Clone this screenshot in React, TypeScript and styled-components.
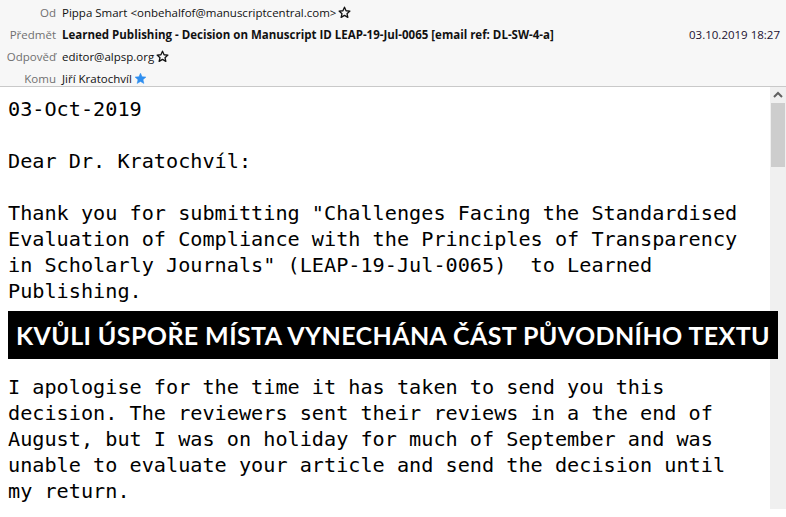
import styled, { createGlobalStyle } from 'styled-components';

const GlobalStyle = createGlobalStyle`
  html, body {
    margin: 0;
    padding: 0;
    background: #ffffff;
  }
`;

interface StarProps {
  filled?: boolean;
}

function Star({ filled }: StarProps) {
  return (
    <StarIcon viewBox='0 0 24 24' aria-hidden='true'>
      <path
        d='M12 2.2l2.9 6.6 7.1.6-5.4 4.7 1.6 7-6.2-3.7-6.2 3.7 1.6-7L2 9.4l7.1-.6z'
        fill={filled ? '#2f8ff0' : 'none'}
        stroke={filled ? '#2f8ff0' : '#111'}
        strokeWidth={filled ? 1 : 2.4}
        strokeLinejoin='round'
      />
    </StarIcon>
  );
}

const bodyTop = [
  '03-Oct-2019',
  '',
  'Dear Dr. Kratochvíl:',
  '',
  'Thank you for submitting "Challenges Facing the Standardised',
  'Evaluation of Compliance with the Principles of Transparency',
  'in Scholarly Journals" (LEAP-19-Jul-0065)  to Learned',
  'Publishing.',
];

const bodyBottom = [
  'I apologise for the time it has taken to send you this',
  'decision. The reviewers sent their reviews in a the end of',
  'August, but I was on holiday for much of September and was',
  'unable to evaluate your article and send the decision until',
  'my return.',
];

export default function App() {
  return (
    <Window>
      <GlobalStyle />
      <Header>
        <Label>Od</Label>
        <Value>
          Pippa Smart &lt;onbehalfof@manuscriptcentral.com&gt;
          <Star />
        </Value>
        <Label>Předmět</Label>
        <Value $bold>
          Learned Publishing - Decision on Manuscript ID LEAP-19-Jul-0065 [email ref: DL-SW-4-a]
        </Value>
        <DateCell>03.10.2019 18:27</DateCell>
        <Label>Odpověď</Label>
        <Value>
          editor@alpsp.org
          <Star />
        </Value>
        <Label>Komu</Label>
        <Value>
          Jiří Kratochvíl
          <Star filled />
        </Value>
      </Header>
      <Body>
        <Content>
          <Plain>{bodyTop.join('\n')}</Plain>
          <Banner>KVŮLI ÚSPOŘE MÍSTA VYNECHÁNA ČÁST PŮVODNÍHO TEXTU</Banner>
          <Plain>{bodyBottom.join('\n')}</Plain>
        </Content>
        <Scrollbar>
          <ScrollArrow viewBox='0 0 16 16' aria-hidden='true'>
            <path d='M4 10l4-4 4 4' fill='none' stroke='#606060' strokeWidth='2' />
          </ScrollArrow>
          <Thumb />
        </Scrollbar>
      </Body>
    </Window>
  );
}

const Window = styled.div`
  width: 786px;
  height: 517px;
  overflow: hidden;
  background: #ffffff;
  display: flex;
  flex-direction: column;
`;

const Header = styled.div`
  height: 87px;
  box-sizing: border-box;
  padding: 1px 6px 0 0;
  background: #f7f7f7;
  border-bottom: 1px solid #c9c9c9;

  display: grid;
  grid-template-columns: 56px 1fr auto;
  grid-auto-rows: 22px;
  column-gap: 6px;
  align-items: center;

  font-family: 'Open Sans', 'Noto Sans', sans-serif;
  font-size: 11.5px;
  color: #111;
`;

const Label = styled.div`
  grid-column: 1;
  text-align: right;
  color: #707070;
`;

const Value = styled.div<{ $bold?: boolean }>`
  grid-column: 2;
  display: flex;
  align-items: center;
  gap: 2px;
  white-space: nowrap;
  font-weight: ${(p) => (p.$bold ? 700 : 400)};
`;

const DateCell = styled.div`
  grid-column: 3;
  color: #1a1030;
`;

const StarIcon = styled.svg`
  width: 13px;
  height: 13px;
  flex-shrink: 0;
`;

const Body = styled.div`
  flex: 1;
  display: flex;
  align-items: flex-start;
`;

const Content = styled.div`
  flex: 1;
  padding: 9px 0 0 8px;
  display: flex;
  flex-direction: column;
`;

const Plain = styled.div`
  white-space: pre;
  font-family: 'DejaVu Sans Mono', 'Liberation Mono', monospace;
  font-size: 20.2px;
  line-height: 26px;
  color: #000;
`;

const Banner = styled.div`
  position: relative;
  z-index: 1;
  margin: 7px -8px 15px 0;
  height: 48px;
  background: #000;
  color: #fff;
  display: flex;
  align-items: center;
  justify-content: center;
  font-family: 'Lato', 'Open Sans', sans-serif;
  font-weight: 700;
  font-size: 25px;
  letter-spacing: 0.4px;
  white-space: nowrap;
`;

const Scrollbar = styled.div`
  width: 16px;
  height: 422px;
  background: #f0f0f0;
  display: flex;
  flex-direction: column;
`;

const ScrollArrow = styled.svg`
  width: 16px;
  height: 16px;
`;

const Thumb = styled.div`
  margin: 0 1px;
  height: 64px;
  background: #cdcdcd;
`;
